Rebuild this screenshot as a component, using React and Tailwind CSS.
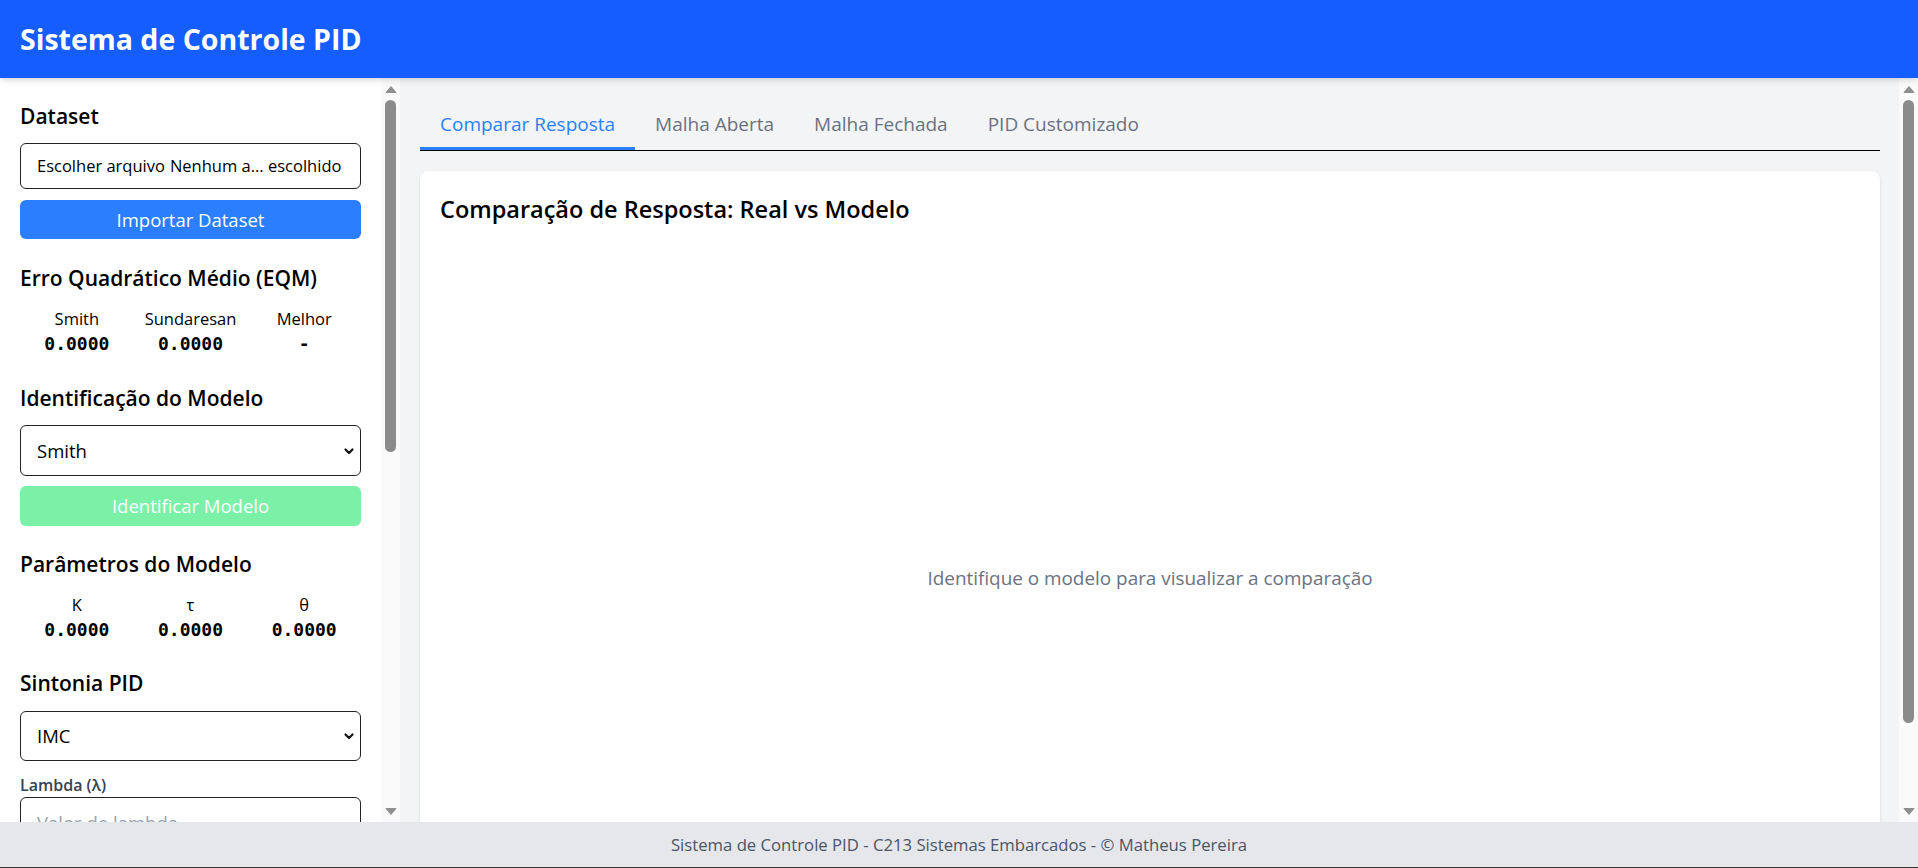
import React from "react";

const SANS = "font-['Open_Sans','Noto_Sans',sans-serif]";
const MONO = "font-['DejaVu_Sans_Mono','Liberation_Mono',monospace]";

function Chevron() {
  return (
    <svg
      className="pointer-events-none absolute right-[6px] top-1/2 -translate-y-1/2"
      width="12"
      height="12"
      viewBox="0 0 12 12"
      fill="none"
    >
      <path d="M2.5 4.5l3.5 3.5 3.5-3.5" stroke="#111" strokeWidth="2.2" strokeLinecap="round" strokeLinejoin="round" />
    </svg>
  );
}

function Triangle({ down }) {
  return (
    <svg width="12" height="9" viewBox="0 0 12 9">
      <path d={down ? "M1 1.5h10L6 7.5z" : "M1 7.5h10L6 1.5z"} fill="#8f8f8f" stroke="#8f8f8f" strokeWidth="1" strokeLinejoin="round" />
    </svg>
  );
}

function ScrollBar({ thumbHeight }) {
  return (
    <div className="flex w-[19px] shrink-0 flex-col items-center bg-[#fafafa]">
      <div className="flex h-[22px] w-full items-center justify-center pt-[1px]">
        <Triangle />
      </div>
      <div className="w-[11px] rounded-full bg-[#8b8b8b]" style={{ height: thumbHeight }} />
      <div className="flex-1" />
      <div className="flex h-[21px] w-full items-center justify-center pb-[1px]">
        <Triangle down />
      </div>
    </div>
  );
}

function Select({ value, options, className }) {
  return (
    <div className={"relative " + className}>
      <select
        defaultValue={value}
        className="w-full h-full appearance-none rounded-md border border-[#222] bg-white pl-4 pr-8 text-[18.5px] text-black outline-none"
      >
        {options.map((o) => (
          <option key={o}>{o}</option>
        ))}
      </select>
      <Chevron />
    </div>
  );
}

function Heading({ children, className }) {
  return <h2 className={"text-[21px] font-semibold leading-[32px] text-black " + className}>{children}</h2>;
}

function Stats({ items, className }) {
  return (
    <div className={"grid grid-cols-3 text-center text-black " + className}>
      {items.map(([label, value]) => (
        <div key={label} className="flex flex-col items-center">
          <span className="text-[16.5px] leading-[24px]">{label}</span>
          <span className={MONO + " text-[18px] font-bold leading-[25px]"}>{value}</span>
        </div>
      ))}
    </div>
  );
}

function Sidebar() {
  return (
    <aside className="flex w-[400px] shrink-0 bg-white">
      <div className="min-w-0 flex-1 overflow-hidden px-5 pt-[22px]">
        <Heading>Dataset</Heading>
        <div className="mt-[11px] flex h-[46px] items-center rounded-md border border-[#222] pl-4 text-[16.5px] text-black">
          <span>Escolher arquivo</span>
          <span className="ml-[5px]">Nenhum a... escolhido</span>
        </div>
        <button className="mt-[11px] h-[39px] w-full rounded-md bg-blue-500 text-[18.5px] text-white">
          Importar Dataset
        </button>

        <Heading className="mt-[23px]">Erro Quadrático Médio (EQM)</Heading>
        <Stats
          className="mt-[13px]"
          items={[
            ["Smith", "0.0000"],
            ["Sundaresan", "0.0000"],
            ["Melhor", "-"],
          ]}
        />

        <Heading className="mt-[26px]">Identificação do Modelo</Heading>
        <Select className="mt-[11px] h-[51px]" value="Smith" options={["Smith", "Sundaresan"]} />
        <button className="mt-[10px] h-[40px] w-full rounded-md bg-green-300 text-[18.5px] text-white">
          Identificar Modelo
        </button>

        <Heading className="mt-[22px]">Parâmetros do Modelo</Heading>
        <Stats
          className="mt-[13px]"
          items={[
            ["K", "0.0000"],
            ["τ", "0.0000"],
            ["θ", "0.0000"],
          ]}
        />

        <Heading className="mt-[25px]">Sintonia PID</Heading>
        <Select className="mt-[12px] h-[50px]" value="IMC" options={["IMC", "ITAE", "CHR"]} />
        <label className="mt-[12px] block text-[16px] font-semibold leading-[24px] text-gray-700">Lambda (λ)</label>
        <input
          placeholder="Valor de lambda"
          className="h-[50px] w-full rounded-md border border-[#222] pl-4 text-[18.5px] text-black outline-none placeholder:text-gray-400"
        />
      </div>
      <ScrollBar thumbHeight={352} />
    </aside>
  );
}

function Tabs() {
  const tabs = ["Comparar Resposta", "Malha Aberta", "Malha Fechada", "PID Customizado"];
  return (
    <div className="flex border-b border-black">
      {tabs.map((t, i) => (
        <button
          key={t}
          className={
            "px-5 pt-3 pb-[9px] text-[19px] leading-[28px] border-b-[3px] " +
            (i === 0 ? "border-blue-500 text-blue-500" : "border-transparent text-gray-500")
          }
        >
          {t}
        </button>
      ))}
    </div>
  );
}

function Main() {
  return (
    <main className="flex min-w-0 flex-1 bg-gray-100">
      <div className="min-w-0 flex-1 overflow-hidden pl-5 pr-[19px] pt-5">
        <Tabs />
        <section className="mt-5 rounded-lg bg-white px-5 pt-[22px] pb-5 shadow-sm">
          <h2 className="text-[23.5px] font-semibold leading-[33px] text-black">
            Comparação de Resposta: Real vs Modelo
          </h2>
          <div className="mt-[14px] flex h-[676px] items-center justify-center text-[18.9px] text-gray-500">
            Identifique o modelo para visualizar a comparação
          </div>
        </section>
      </div>
      <ScrollBar thumbHeight={623} />
    </main>
  );
}

export default function App() {
  return (
    <div className={SANS + " flex h-screen flex-col overflow-hidden"}>
      <header className="relative z-10 flex h-[78px] shrink-0 items-center bg-blue-600 px-5 shadow-md">
        <h1 className="text-[28.5px] font-bold text-white">Sistema de Controle PID</h1>
      </header>
      <div className="flex min-h-0 flex-1">
        <Sidebar />
        <Main />
      </div>
      <footer className="flex h-[46px] shrink-0 items-center justify-center border-b border-[#3a3a3a] bg-gray-200 text-[16.7px] text-gray-600">
        Sistema de Controle PID - C213 Sistemas Embarcados - © Matheus Pereira
      </footer>
    </div>
  );
}
